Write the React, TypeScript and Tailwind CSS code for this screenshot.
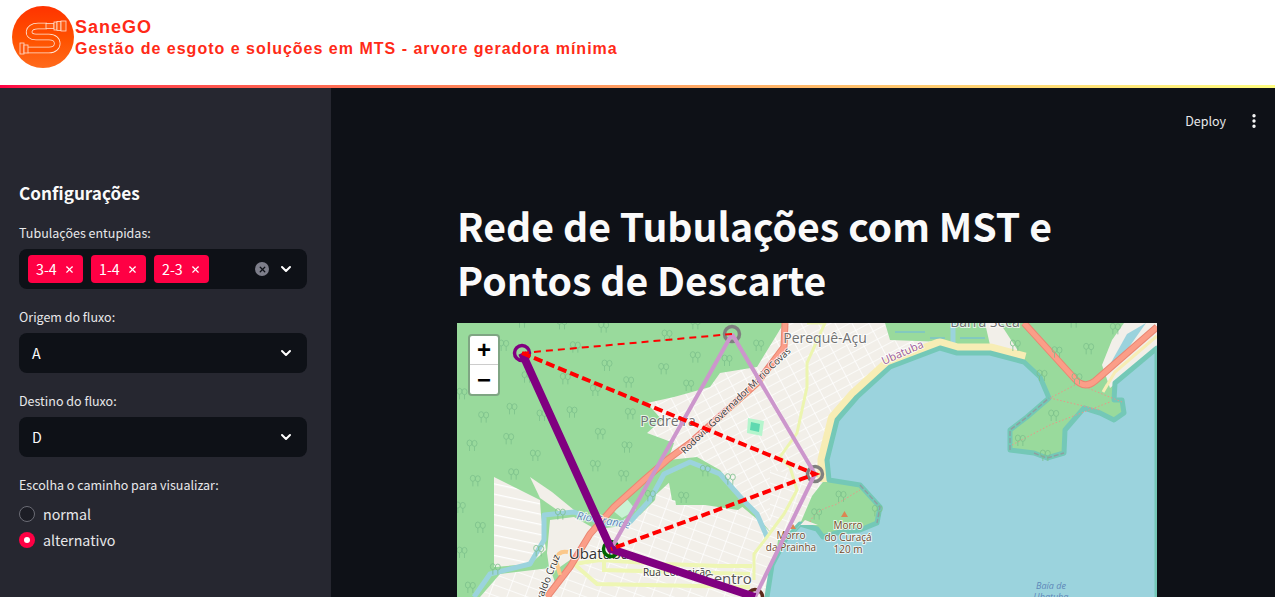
import { ChevronDown, EllipsisVertical, X } from "lucide-react";

const uiFont = "font-['Noto_Sans_CJK_SC','Noto_Sans',sans-serif]";

// zoom crop coordinates -> page coordinates
const fromCrop = (ox: number, oy: number, pts: number[][]) => pts.map(([x, y]) => [ox + x / 3, oy + y / 3]);

const trees = [
  ...fromCrop(457, 320, [
    [195, 5], [315, 10], [440, 20], [630, 45], [715, 10], [905, 75], [140, 75], [355, 80], [450, 135], [715, 110],
    [810, 120], [620, 145], [325, 175], [210, 170], [515, 185], [695, 195], [15, 220], [415, 210], [165, 265],
    [345, 275], [255, 285], [520, 280], [430, 340], [155, 355], [80, 290], [45, 375], [510, 380], [235, 405],
  ]),
  ...fromCrop(457, 457, [
    [55, 70], [170, 50], [415, 25], [500, 55], [745, 40], [820, 65], [580, 115], [680, 120], [310, 170], [10, 150],
    [70, 210], [15, 285], [245, 280], [115, 335], [40, 390],
  ]),
  ...fromCrop(807, 320, [
    [625, 75], [750, 95], [845, 85], [925, 25], [800, 5], [740, 285], [640, 360], [715, 405], [810, 175], [705, 165],
  ]),
  ...fromCrop(760, 457, [[243, 117], [170, 170], [352, 160]]),
];

const water =
  "M1157 348 L1115 383 L1114 400 L1122 400 L1124 413 L1114 420 L1100 413 L1084 408 L1065 430 L1064 453 L1047 458 L1034 453 L1010 450 L1010 430 L1027 417 L1049 398 L1040 377 L1024 362 L990 353 L957 353 L940 348 L890 367 L857 397 L837 420 L827 460 L829 480 L860 485 L880 507 L877 523 L860 530 L840 532 L823 537 L817 529 L800 524 L785 540 L772 565 L767 597 L767 830 L1157 830 Z";

function Tree({ x, y }: { x: number; y: number }) {
  return (
    <g transform={`translate(${x - 5} ${y - 5})`} fill="none" stroke="#7cc08c" strokeWidth="0.8">
      <ellipse cx="2.5" cy="3" rx="2.5" ry="3" />
      <path d="M2.5 6V11" />
      <ellipse cx="7.5" cy="3.4" rx="2.5" ry="3" />
      <path d="M7.5 6.4V11" />
    </g>
  );
}

function MapLabel({ x, y, size, fill, children, rotate, italic, halo = true }: {
  x: number; y: number; size: number; fill: string; children: string; rotate?: number; italic?: boolean; halo?: boolean;
}) {
  return (
    <text
      x={x}
      y={y}
      fontSize={size}
      fill={fill}
      fontStyle={italic ? "italic" : undefined}
      textAnchor="middle"
      fontFamily="'Open Sans', sans-serif"
      stroke={halo ? "#ffffff" : undefined}
      strokeOpacity={halo ? 0.75 : undefined}
      strokeWidth={halo ? 2 : undefined}
      paintOrder="stroke"
      transform={rotate ? `rotate(${rotate} ${x} ${y})` : undefined}
    >
      {children}
    </text>
  );
}

function MapDrawing() {
  return (
    <svg viewBox="457 323 700 500" className="block h-[500px] w-[700px]">
      <defs>
        <pattern id="st1" width="15" height="9" patternUnits="userSpaceOnUse" patternTransform="rotate(-28)">
          <rect width="15" height="9" fill="#f2efe9" />
          <path d="M0 0H15M0 0V9" stroke="#fff" strokeWidth="1.600" />
        </pattern>
        <pattern id="st2" width="17" height="10" patternUnits="userSpaceOnUse" patternTransform="rotate(20)">
          <rect width="17" height="10" fill="#f2efe9" />
          <path d="M0 0H17M0 0V10" stroke="#fff" strokeWidth="1.600" />
        </pattern>
        <pattern id="st3" width="60" height="10" patternUnits="userSpaceOnUse" patternTransform="rotate(12)">
          <rect width="60" height="10" fill="#f2efe9" />
          <path d="M0 0H60" stroke="#fff" strokeWidth="2.500" />
        </pattern>
      </defs>
      <rect x="457" y="323" width="700" height="500" fill="#99da9c" />

      {/* built up areas */}
      <path d="M784 323 L757 367 L720 373 L710 387 L674 397 L647 403 L662 420 L647 433 L674 443 L668 460 L697 457 L720 470 L745 500 L760 520 L775 537 L786 500 L820 470 L830 440 L850 400 L890 362 L945 342 L890 340 L885 323 Z" fill="url(#st1)" />
      <path d="M650 500 L672 480 L676 505 L740 505 L758 520 L778 540 L770 597 L550 597 L575 560 L590 530 L630 525 Z" fill="url(#st2)" />
      <path d="M770 470 L826 478 L812 496 L800 524 L785 540 L770 540 Z" fill="url(#st2)" />
      <path d="M494 477 L540 500 L541 515 L546 550 L530 564 L494 567 Z" fill="url(#st3)" />
      <path d="M550 520 L574 517 L597 530 L590 544 L570 560 L550 574 L547 553 Z" fill="#f2efe9" />
      <path d="M500 574 L550 568 L560 597 L480 597 Z" fill="url(#st2)" />
      <path d="M530 477 L552 492 L574 510 L560 512 L540 498 Z" fill="#f2efe9" />
      <path d="M1124 323 L1112 340 L1102 365 L1110 388 L1157 350 L1157 323 Z" fill="#f2efe9" />
      <path d="M1127 334 L1146 323 L1120 360 L1108 368 Z" fill="#9bd3dd" />
      <path d="M985 323 L1000 323 L1024 360 L990 345 Z" fill="#f2efe9" />

      {/* green pockets around the river */}
      <path d="M668 477 L692 466 L720 478 L745 505 L738 510 L705 505 L672 500 Z" fill="#99da9c" />
      <path d="M610 520 L640 500 L660 470 L655 500 L640 515 Z" fill="#99da9c" />
      <path d="M612 510 L626 498 L636 510 L622 518 Z" fill="#c8f2d4" />
      <path d="M748 418 L764 421 L762 436 L747 433 Z" fill="#b5f5cd" />
      <path d="M751 422 L760 424 L759 432 L750 430 Z" fill="#5fd9b0" />

      {/* rivers */}
      <path d="M474 597 L490 574 L530 564 L544 540 L544 515 L574 512 L604 524 L630 522 L650 500 L664 474 L690 462 L720 474 L743 500 L757 514 L767 537" fill="none" stroke="#9bd3dd" strokeWidth="5" strokeLinejoin="round" />
      <path d="M953 323 L953 345" fill="none" stroke="#9bd3dd" strokeWidth="5" />
      <path d="M895 332 H925 M930 338 H945 M960 338 H985" fill="none" stroke="#6cb8e0" strokeWidth="1" />

      {/* sea and beach */}
      <path d="M827 482 L827 460 L837 420 L857 397 L890 367 L940 348 L957 353 L990 353 L1024 362" fill="none" stroke="#f7edb5" strokeWidth="19" strokeLinejoin="round" />
      <path d={water} fill="#9bd3dd" stroke="#74c8b7" strokeWidth="5" strokeLinejoin="round" />
      <path d="M1157 336 L1115 372 L1103 392 L1107 385" fill="none" stroke="#f7edb5" strokeWidth="3" />
      <path d="M805 520 L818 525 L800 525 L790 536 Z" fill="#f2efe9" />
      <path d="M1010 450 L1010 430 L1027 417 L1049 398 M1034 453 L1047 458 L1064 453 M860 485 L880 507 L877 523" fill="none" stroke="#8e9ea0" strokeWidth="1.400" strokeDasharray="5 2" />

      {/* roads */}
      <path d="M807 323 L825 323 L807 363 L807 387 L797 433 L780 457 L790 467 L797 490 L784 514 L767 537 L754 554 L754 580" fill="none" stroke="#ecf5b0" strokeWidth="3" strokeLinejoin="round" />
      <path d="M574 564 L600 560 L664 564 L720 566 L752 566 M574 564 L597 584 L750 587 M604 560 L604 570 L750 574" fill="none" stroke="#eef6b4" strokeWidth="4" />
      <path d="M785 323 L784 347 L757 383 L690 443 L667 460 L644 480 L614 507 L590 534 L570 567 L547 597" fill="none" stroke="#e98672" strokeWidth="7" />
      <path d="M785 323 L784 347 L757 383 L690 443 L667 460 L644 480 L614 507 L590 534 L570 567 L547 597" fill="none" stroke="#fb9e88" strokeWidth="5" />
      <path d="M1024 323 L1074 378 Q1084 390 1095 381 L1157 327" fill="none" stroke="#e98672" strokeWidth="7" />
      <path d="M1024 323 L1074 378 Q1084 390 1095 381 L1157 327" fill="none" stroke="#fb9e88" strokeWidth="5" />
      <path d="M560 575 L556 560 Q558 550 568 552" fill="none" stroke="#fbc88a" strokeWidth="4" />
      <path d="M1075 385 L1050 398 M1085 387 L1122 402 M1050 398 L1100 410 M1012 445 L1050 425 L1110 402" fill="none" stroke="#f08e85" strokeWidth="0.900" strokeDasharray="1.500 2" />
      <path d="M810 522 Q815 510 835 505 L860 490" fill="none" stroke="#f08e85" strokeWidth="0.900" strokeDasharray="1.500 2" />

      {trees.map(([x, y], i) => (
        <Tree key={i} x={x} y={y} />
      ))}

      {/* labels */}
      <MapLabel x={985} y={327} size={14} fill="#707070">Barra Seca</MapLabel>
      <MapLabel x={825} y={343} size={14} fill="#707070">Perequê-Açu</MapLabel>
      <MapLabel x={668} y={426} size={14} fill="#707070">Pedreira</MapLabel>
      <MapLabel x={904} y={356} size={11} fill="#9a5a9a" rotate={-24}>Ubatuba</MapLabel>
      <MapLabel x={738} y={403} size={9.500} fill="#333" rotate={-44}>Rodovia Governador Mário Covas</MapLabel>
      <MapLabel x={603} y={524} size={11} fill="#5d86b8" rotate={10} italic>Rio Grande</MapLabel>
      <MapLabel x={548} y={586} size={10} fill="#333" rotate={-68}>Oswaldo Cruz</MapLabel>
      <MapLabel x={599} y={559} size={15} fill="#333">Ubatuba</MapLabel>
      <MapLabel x={677} y={576} size={10} fill="#333">Rua Conceição</MapLabel>
      <MapLabel x={728} y={584} size={15} fill="#555">Centro</MapLabel>
      <path d="M841 517 L848 517 L844.500 511 Z" fill="#dc8552" />
      <path d="M790 529 L796 529 L793 524 Z" fill="#dc8552" />
      <MapLabel x={848} y={529} size={10} fill="#734a2d">Morro</MapLabel>
      <MapLabel x={848} y={541} size={10} fill="#734a2d">do Curaçá</MapLabel>
      <MapLabel x={848} y={553} size={10} fill="#734a2d">120 m</MapLabel>
      <MapLabel x={791} y={539} size={10} fill="#734a2d">Morro</MapLabel>
      <MapLabel x={791} y={551} size={10} fill="#734a2d">da Prainha</MapLabel>
      <MapLabel x={1051} y={589} size={9} fill="#5d86b8" italic halo={false}>Baía de</MapLabel>
      <MapLabel x={1051} y={600} size={9} fill="#5d86b8" italic halo={false}>Ubatuba</MapLabel>

      {/* graph */}
      <g fill="none">
        <circle cx="732" cy="334" r="7.500" stroke="#808080" strokeWidth="3.500" />
        <circle cx="815" cy="474" r="7.500" stroke="#808080" strokeWidth="3.500" />
        <circle cx="611" cy="549" r="7.500" stroke="#006400" strokeWidth="3.500" />
        <circle cx="755" cy="597" r="7.500" stroke="#5c2a1a" strokeWidth="3.500" />
        <circle cx="522" cy="353" r="7.500" stroke="#800080" strokeWidth="3.500" />
        <path d="M732 334 L611 549 M732 334 L815 474 L755 597" stroke="#cc96cc" strokeWidth="4" />
        <path d="M522 353 L611 549 L755 597" stroke="#800080" strokeWidth="8" />
        <path d="M522 353 L732 334" stroke="#ff0000" strokeWidth="2" strokeDasharray="7 5" />
        <path d="M522 353 L815 474 L611 549" stroke="#ff0000" strokeWidth="4" strokeDasharray="9 4" />
      </g>
    </svg>
  );
}

function SanegoLogo() {
  const pipe = "M47 26 H38 C27 26 26 37 36 37 H49 C60 37 60 50 49 50 H28";
  return (
    <svg viewBox="12 6 62 62" className="h-[62px] w-[62px] shrink-0">
      <defs>
        <linearGradient id="logoBg" x1="0" y1="0" x2="0" y2="1">
          <stop offset="0" stopColor="#ff3300" />
          <stop offset="0.55" stopColor="#ff5200" />
          <stop offset="1" stopColor="#ff6a1c" />
        </linearGradient>
      </defs>
      <circle cx="43" cy="37" r="31" fill="url(#logoBg)" />
      <path d={pipe} fill="none" stroke="#ffe6d8" strokeWidth="6.500" />
      <path d={pipe} fill="none" stroke="#ff5200" strokeWidth="5" />
      <g fill="#ff5a10" stroke="#ffe2d2" strokeWidth="0.800">
        <rect x="46" y="23.500" width="8" height="5" />
        <rect x="54" y="22" width="3" height="8" />
        <rect x="57" y="21.500" width="4" height="9" />
        <rect x="61" y="21" width="5" height="10" />
        <rect x="20" y="43" width="4" height="11" />
        <rect x="24" y="45" width="4" height="8" />
      </g>
    </svg>
  );
}

function Tag({ label }: { label: string }) {
  return (
    <span className="flex h-7 w-[55px] items-center justify-between rounded bg-[#ff0044] pl-2 pr-2 text-[14.25px] text-white">
      {label}
      <X size={11} strokeWidth={2.5} />
    </span>
  );
}

function FieldLabel({ children }: { children: string }) {
  return <p className="mb-1.5 h-5 text-[12.5px] leading-5 text-[#e8e8ea]">{children}</p>;
}

function SelectBox({ value }: { value: string }) {
  return (
    <div className="flex h-10 items-center justify-between rounded-lg bg-[#0e1117] pl-[13px] pr-[13px] text-[14.25px] text-[#fafafa]">
      {value}
      <ChevronDown size={16} strokeWidth={3} className="text-white" />
    </div>
  );
}

function Radio({ label, active }: { label: string; active?: boolean }) {
  return (
    <div className="flex h-[26px] items-center gap-2 text-[14.25px] text-[#e8e8ea]">
      {active ? (
        <span className="flex h-4 w-4 items-center justify-center rounded-full bg-[#ff0044]">
          <span className="h-1.5 w-1.5 rounded-full bg-white" />
        </span>
      ) : (
        <span className="h-4 w-4 rounded-full border border-[#6b6c75] bg-[#1c1d25]" />
      )}
      {label}
    </div>
  );
}

export default function App() {
  return (
    <div className={`flex h-[597px] w-[1275px] flex-col overflow-hidden bg-[#0e1117] ${uiFont}`}>
      <header className="flex h-[85px] shrink-0 items-start gap-px bg-white pl-3 pt-1.5">
        <SanegoLogo />
        <div className="pt-[11px] font-['Liberation_Sans',Arial,sans-serif] font-bold tracking-[1px] text-[#ff2a17]">
          <p className="text-lg leading-[21px]">SaneGO</p>
          <p className="text-base leading-[21px]">Gestão de esgoto e soluções em MTS - arvore geradora mínima</p>
        </div>
      </header>
      <div className="h-[3px] shrink-0 bg-gradient-to-r from-[#ff0044] to-[#fffd80]" />
      <div className="flex min-h-0 flex-1">
        <aside className="w-[331px] shrink-0 bg-[#262730] pl-[19px] pr-6 pt-[95px]">
          <h2 className="mb-5 h-5 text-[17.2px] font-semibold leading-5 text-[#fafafa]">Configurações</h2>
          <FieldLabel>Tubulações entupidas:</FieldLabel>
          <div className="mb-[18px] flex h-10 items-center rounded-lg bg-[#0e1117] pl-[9px] pr-[13px]">
            <div className="flex flex-1 gap-2">
              <Tag label="3-4" />
              <Tag label="1-4" />
              <Tag label="2-3" />
            </div>
            <span className="mr-[9px] flex h-3.5 w-3.5 items-center justify-center rounded-full bg-[#7d7e8a] text-[#0e1117]">
              <X size={9} strokeWidth={3.5} />
            </span>
            <ChevronDown size={16} strokeWidth={3} className="text-white" />
          </div>
          <FieldLabel>Origem do fluxo:</FieldLabel>
          <div className="mb-[18px]">
            <SelectBox value="A" />
          </div>
          <FieldLabel>Destino do fluxo:</FieldLabel>
          <div className="mb-[18px]">
            <SelectBox value="D" />
          </div>
          <p className="mb-[6px] h-5 text-[12.5px] leading-5 text-[#e8e8ea]">Escolha o caminho para visualizar:</p>
          <Radio label="normal" />
          <Radio label="alternativo" active />
        </aside>
        <main className="min-w-0 flex-1">
          <div className="mt-[13px] flex h-10 items-center justify-end gap-[19px] pr-3 text-[12.5px] text-[#e8e8ea]">
            <span>Deploy</span>
            <EllipsisVertical size={18} strokeWidth={2.5} className="text-white" />
          </div>
          <div className="ml-[126px] mt-[57px] w-[700px]">
            <h1 className="mb-[17px] text-[39.2px] font-bold leading-[54px] text-[#fafafa]">
              Rede de Tubulações com MST e Pontos de Descarte
            </h1>
            <div className="relative h-[500px] w-[700px] overflow-hidden">
              <MapDrawing />
              <div className="absolute left-[11px] top-[11px] w-[32px] overflow-hidden rounded border-2 border-[#7fa583] bg-white font-['Liberation_Sans',sans-serif] text-black">
                <div className="flex h-[29px] items-center justify-center border-b border-[#cccccc] text-[24px] font-bold leading-none">+</div>
                <div className="flex h-[29px] items-center justify-center text-[24px] font-bold leading-none">−</div>
              </div>
            </div>
          </div>
        </main>
      </div>
    </div>
  );
}
